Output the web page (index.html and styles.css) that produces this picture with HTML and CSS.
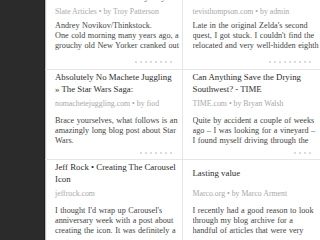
FILE: index.html
```html
<!DOCTYPE html>
<html>
<head>
<meta charset="utf-8">
<link rel="stylesheet" href="styles.css">
</head>
<body>
<div class="app">
  <aside class="sidebar"></aside>
  <main class="feed">
    <article class="card first">
      <h2 class="title"><span>The Man Who Wrote Angry Letters to the Editor Every Day</span></h2>
      <p class="meta">Slate Articles • by Troy Patterson</p>
      <p class="excerpt"><span class="credit">Andrey Novikov/Thinkstock.</span>One cold morning many years ago, a grouchy old New Yorker cranked out a letter to the editor.</p>
      <div class="dots"><i></i><i></i><i></i><i></i><i></i><i></i><i></i><i></i></div>
    </article>
    <article class="card first">
      <h2 class="title"><span>The Eighth Dungeon</span></h2>
      <p class="meta">tevisthompson.com • by admin</p>
      <p class="excerpt">Late in the original Zelda's second quest, I got stuck. I couldn't find the relocated and very well-hidden eighth dungeon.</p>
      <div class="dots"><i></i><i></i><i></i><i></i><i></i><i></i><i></i><i></i><i></i></div>
    </article>
    <article class="card">
      <h2 class="title"><span>Absolutely No Machete Juggling » The Star Wars Saga:</span></h2>
      <p class="meta">nomachetejuggling.com • by fiod</p>
      <p class="excerpt">Brace yourselves, what follows is an amazingly long blog post about Star Wars.</p>
      <div class="dots"><i></i><i></i><i></i><i></i><i></i><i></i><i></i></div>
    </article>
    <article class="card">
      <h2 class="title"><span>Can Anything Save the Drying Southwest? - TIME</span></h2>
      <p class="meta">TIME.com • by Bryan Walsh</p>
      <p class="excerpt">Quite by accident a couple of weeks ago – I was looking for a vineyard – I found myself driving through the desert.</p>
      <div class="dots"><i></i><i></i><i></i><i></i></div>
    </article>
    <article class="card">
      <h2 class="title"><span>Jeff Rock • Creating The Carousel Icon</span></h2>
      <p class="meta">jeffrock.com</p>
      <p class="excerpt">I thought I'd wrap up Carousel's anniversary week with a post about creating the icon. It was definitely a fun one.</p>
      <div class="dots"><i></i><i></i><i></i><i></i><i></i></div>
    </article>
    <article class="card">
      <h2 class="title"><span>Lasting value</span></h2>
      <p class="meta">Marco.org • by Marco Arment</p>
      <p class="excerpt">I recently had a good reason to look through my blog archive for a handful of articles that were very popular.</p>
      <div class="dots"><i></i><i></i><i></i><i></i><i></i><i></i></div>
    </article>
  </main>
</div>
</body>
</html>
```
FILE: styles.css
```css
html, body {
  margin: 0;
  padding: 0;
  background: #ffffff;
}

body {
  width: 320px;
  height: 240px;
  overflow: hidden;
  font-family: "Liberation Serif", "DejaVu Serif", serif;
}

.app {
  display: flex;
  height: 240px;
  overflow: hidden;
}

.sidebar {
  flex: none;
  width: 45px;
  background: #2b2b2c;
  box-shadow: inset -1px 0 0 #1c1c1c, 1px 0 1px rgba(0, 0, 0, 0.25);
}

.feed {
  flex: 1;
  display: grid;
  grid-template-columns: 1fr 1fr;
  align-content: start;
  margin-top: -22px;
}

.card {
  display: flex;
  flex-direction: column;
  padding: 1px 0.4px 2px 10px;
  border-bottom: 1px solid #e6e6e6;
  min-width: 0;
}

.card:nth-child(odd) {
  border-right: 1px solid #e6e6e6;
}

.title {
  margin: 0;
  padding-right: 4px;
  height: 24px;
  display: flex;
  align-items: center;
  font-size: 8.8px;
  line-height: 12px;
  font-weight: normal;
  color: #2e2e2e;
}

.meta {
  margin: 4px 0 0;
  font-size: 7.8px;
  line-height: 10px;
  color: #a8a8a8;
  white-space: nowrap;
}

.excerpt {
  margin: 7px 0 0;
  height: 30px;
  overflow: hidden;
  font-size: 8.2px;
  line-height: 10px;
  word-spacing: 0.5px;
  color: #444444;
}

.credit {
  display: block;
}

.dots {
  display: flex;
  justify-content: flex-end;
  align-items: center;
  gap: 3px;
  height: 8px;
  margin-top: 3px;
  padding-right: 9px;
}

.dots i {
  width: 2px;
  height: 2px;
  border-radius: 50%;
  background: #cfcfcf;
}

.card.first {
  padding-bottom: 3px;
}

.card.first .title {
  align-items: flex-start;
}

.card.first .excerpt {
  margin-top: 4px;
}

.card.first .dots {
  margin-top: 7px;
}
```
